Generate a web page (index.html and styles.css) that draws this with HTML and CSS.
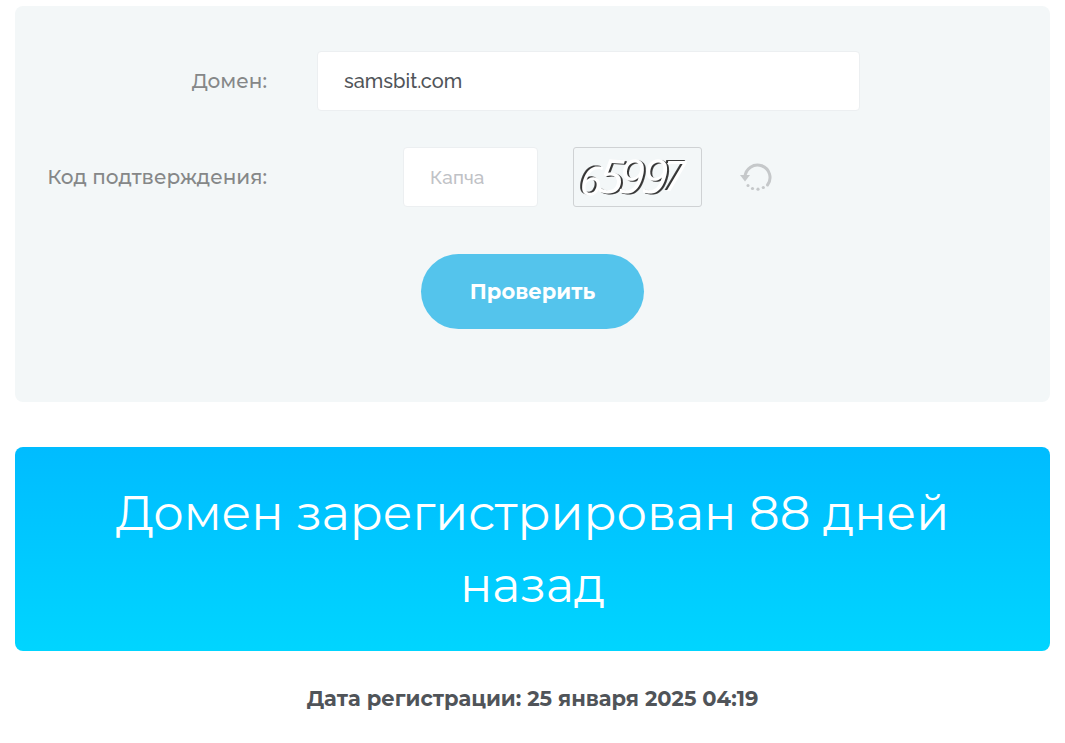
FILE: index.html
```html
<!DOCTYPE html>
<html lang="ru">
<head>
<meta charset="utf-8">
<meta name="viewport" content="width=device-width, initial-scale=1">
<title>Проверка домена</title>
<link rel="stylesheet" href="styles.css">
</head>
<body>
<main class="page">
  <form class="panel">
    <div class="row">
      <label class="label" for="domain">Домен:</label>
      <input class="input" id="domain" type="text" value="samsbit.com">
    </div>
    <div class="row">
      <label class="label" for="captcha">Код подтверждения:</label>
      <div class="captcha">
        <input class="input input-code" id="captcha" type="text" placeholder="Капча">
        <svg class="captcha-image" width="129" height="60" viewBox="0 0 129 60" role="img" aria-label="Код на картинке">
          <g class="digits">
            <g class="edge-left">
              <text x="5" y="49" font-size="42" transform="rotate(4 16 34)">6</text>
            </g>
            <g class="edge-right">
              <text x="24" y="47" font-size="49" transform="rotate(4 40 30)">5</text>
              <text x="45" y="47" font-size="49" transform="rotate(4 60 30)">9</text>
              <text x="69" y="47" font-size="49" transform="rotate(4 84 30)">9</text>
            </g>
            <g class="edge-left">
              <text x="91" y="44" font-size="44">7</text>
            </g>
          </g>
        </svg>
        <button class="refresh" type="button" aria-label="Обновить код">
          <svg width="32" height="32" viewBox="0 0 32 32" aria-hidden="true">
            <path class="arc" d="M5 16A12.500 12.500 0 1 1 27.500 24"/>
            <path class="head" d="M0 14h10L5 20.500z"/>
            <g class="head"><circle cx="8" cy="24.500" r="1.500"/><circle cx="12.500" cy="27.500" r="1.600"/><circle cx="18" cy="28.200" r="1.600"/><circle cx="23.300" cy="26.500" r="1.600"/></g>
          </svg>
        </button>
      </div>
    </div>
    <button class="submit" type="submit">Проверить</button>
  </form>
  <h1 class="result">Домен зарегистрирован 88 дней назад</h1>
  <p class="date">Дата регистрации: 25 января 2025 04:19</p>
</main>
</body>
</html>
```
FILE: styles.css
```css
* { box-sizing: border-box; }
body {
  margin: 0;
  background: #fff;
  color: #505459;
  font-family: Montserrat, Inter, sans-serif;
}
.page { padding: 6px 15px 30px; }
.panel {
  display: flex;
  flex-direction: column;
  padding: 45px 0 73px;
  border-radius: 8px;
  background: #f3f7f8;
}
.row {
  display: grid;
  grid-template-columns: 252px minmax(0, 1fr) 140px;
  column-gap: 50px;
  align-items: center;
  margin-bottom: 36px;
}
.label {
  color: #858788;
  font-size: 20px;
  font-weight: 500;
  line-height: 30px;
  text-align: right;
  white-space: nowrap;
}
.input {
  width: 100%;
  height: 60px;
  padding: 0 26px;
  border: 1px solid #eceff1;
  border-radius: 4px;
  background: #fff;
  color: #505459;
  font: 500 20px Raleway, Inter, sans-serif;
}
.input::placeholder { color: #bfc2c6; opacity: 1; font-size: 19px; }
.captcha {
  display: flex;
  align-items: center;
  justify-content: center;
  padding-right: 2px;
}
.input-code { width: 135px; }
.captcha-image {
  margin: 0 38px 0 35px;
  border: 1px solid #cfd2d4;
  border-radius: 3px;
  overflow: visible;
}
.digits {
  fill: #fff;
  font-family: "Open Sans", sans-serif;
  font-style: italic;
}
.edge-left { filter: drop-shadow(-2px -1px 0 #333); }
.edge-right { filter: drop-shadow(2px 1px 0 #333); }
.refresh {
  display: flex;
  padding: 0;
  border: 0;
  background: none;
  cursor: pointer;
}
.arc { fill: none; stroke: #c5c8ca; stroke-width: 3; stroke-linecap: round; }
.head { fill: #c5c8ca; }
.submit {
  align-self: center;
  height: 75px;
  margin-top: 11px;
  padding: 0 49px;
  border: 0;
  border-radius: 38px;
  background: #54c4ec;
  color: #fff;
  font: 700 21px/30px Montserrat, Inter, sans-serif;
  cursor: pointer;
}
.result {
  margin: 45px 0 0;
  padding: 30px;
  border-radius: 8px;
  background: linear-gradient(#00bcff, #00d5ff);
  color: #fff;
  font-size: 48px;
  font-weight: 400;
  line-height: 72px;
  text-align: center;
}
.date {
  margin: 33px 0 0;
  font-size: 21px;
  font-weight: 700;
  line-height: 30px;
  text-align: center;
}
```
